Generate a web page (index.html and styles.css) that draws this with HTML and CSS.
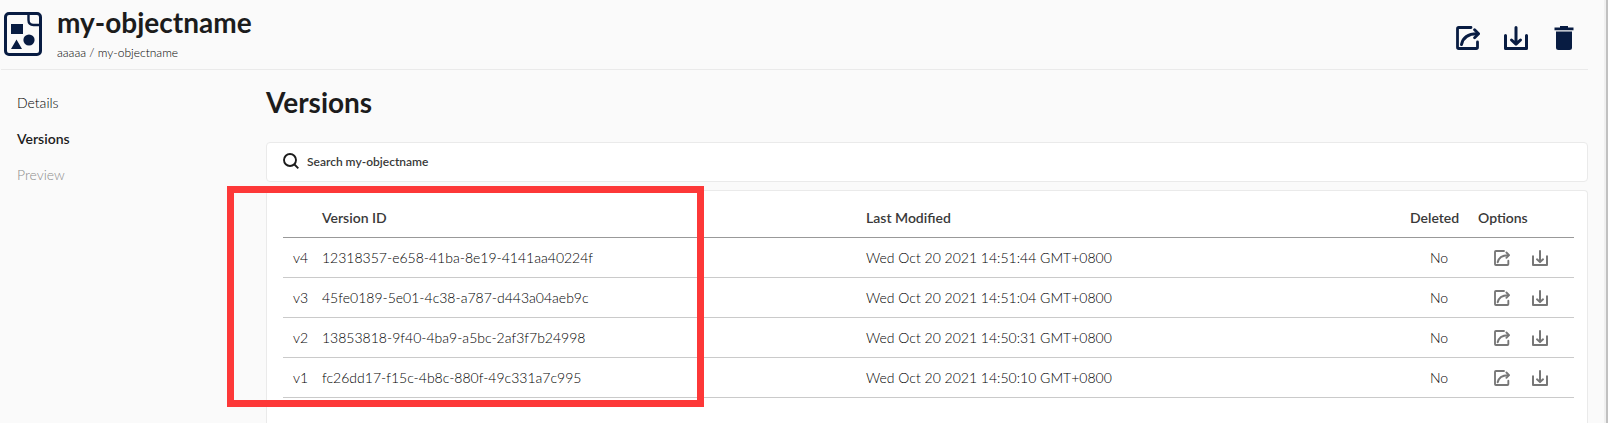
FILE: index.html
```html
<!DOCTYPE html>
<html lang="en">
<head>
    <meta charset="UTF-8">
    <meta name="viewport" content="width=device-width, initial-scale=1.0">
    <title>my-objectname</title>
    <link rel="stylesheet" href="styles.css">
</head>
<body>

    <!-- Icons shared by the header and the table rows -->
    <svg class="icon-defs" aria-hidden="true">
        <symbol id="share" viewBox="0 0 24 24">
            <path d="M15 1.5H2.8Q1.5 1.5 1.5 2.8V21.2Q1.5 22.5 2.8 22.5H20.2Q21.5 22.5 21.5 21.2V16" fill="none" stroke="currentColor" stroke-width="2.8" stroke-linecap="round"/>
            <path d="M5.5 18.5C7 11.5 12 7.8 21 7.8" fill="none" stroke="currentColor" stroke-width="3" stroke-linecap="round"/>
            <path d="M18.6 3.8L22.6 7.8L18.6 11.8" fill="none" stroke="currentColor" stroke-width="2.8" stroke-linecap="round" stroke-linejoin="round"/>
        </symbol>
        <symbol id="download" viewBox="0 0 24 24">
            <path d="M1.5 9.5V22.4H22.5V9.5" fill="none" stroke="currentColor" stroke-width="3" stroke-linecap="round" stroke-linejoin="round"/>
            <path d="M12 1.5V17M7.5 14L12 18.2L16.5 14" fill="none" stroke="currentColor" stroke-width="3" stroke-linecap="round" stroke-linejoin="round"/>
        </symbol>
    </svg>

    <div class="page">
        <!-- Object header -->
        <header class="header">
            <svg class="object-icon" viewBox="0 0 38 44" aria-hidden="true">
                <rect x="1.5" y="1.5" width="35" height="41" rx="3.5" fill="none" stroke="#081c42" stroke-width="3"/>
                <path d="M24.5 1V8Q24.5 13 29.5 13H37" fill="none" stroke="#081c42" stroke-width="2.4"/>
                <path d="M7 12H19V22H7ZM12.5 27.5L18 37H7Z" fill="#081c42"/>
                <circle cx="25" cy="28" r="5.6" fill="#081c42"/>
            </svg>
            <div class="object-name">
                <h1>my-objectname</h1>
                <p>aaaaa / my-objectname</p>
            </div>
            <div class="actions">
                <button type="button" aria-label="Share"><svg><use href="#share"/></svg></button>
                <button type="button" aria-label="Download"><svg><use href="#download"/></svg></button>
                <button type="button" aria-label="Delete">
                    <svg viewBox="0 0 24 24">
                        <path d="M2.5 1.6H8V0H16V1.6H21.5V4.2H2.5ZM4 5.5H20V21.5Q20 24 17.5 24H6.5Q4 24 4 21.5Z" fill="currentColor"/>
                    </svg>
                </button>
            </div>
        </header>

        <div class="body">
            <nav class="menu">
                <a href="#details">Details</a>
                <a href="#versions" class="active">Versions</a>
                <a class="disabled">Preview</a>
            </nav>

            <main class="content">
                <h2>Versions</h2>

                <label class="search">
                    <svg viewBox="0 0 16 16" aria-hidden="true">
                        <circle cx="7" cy="7" r="6" fill="none" stroke="currentColor" stroke-width="1.9"/>
                        <path d="M11.5 11.5L15.3 15.3" stroke="currentColor" stroke-width="1.9"/>
                    </svg>
                    <input type="text" placeholder="Search my-objectname" aria-label="Search my-objectname">
                </label>

                <div class="panel">
                    <table>
                        <thead>
                            <tr>
                                <th class="col-version"></th>
                                <th>Version ID</th>
                                <th>Last Modified</th>
                                <th class="col-deleted">Deleted</th>
                                <th class="col-options">Options</th>
                            </tr>
                        </thead>
                        <tbody>
                            <tr>
                                <td>v4</td>
                                <td>12318357-e658-41ba-8e19-4141aa40224f</td>
                                <td>Wed Oct 20 2021 14:51:44 GMT+0800</td>
                                <td class="deleted">No</td>
                                <td><div class="options">
                                    <button type="button" aria-label="Share v4"><svg><use href="#share"/></svg></button>
                                    <button type="button" aria-label="Download v4"><svg><use href="#download"/></svg></button>
                                </div></td>
                            </tr>
                            <tr>
                                <td>v3</td>
                                <td>45fe0189-5e01-4c38-a787-d443a04aeb9c</td>
                                <td>Wed Oct 20 2021 14:51:04 GMT+0800</td>
                                <td class="deleted">No</td>
                                <td><div class="options">
                                    <button type="button" aria-label="Share v3"><svg><use href="#share"/></svg></button>
                                    <button type="button" aria-label="Download v3"><svg><use href="#download"/></svg></button>
                                </div></td>
                            </tr>
                            <tr>
                                <td>v2</td>
                                <td>13853818-9f40-4ba9-a5bc-2af3f7b24998</td>
                                <td>Wed Oct 20 2021 14:50:31 GMT+0800</td>
                                <td class="deleted">No</td>
                                <td><div class="options">
                                    <button type="button" aria-label="Share v2"><svg><use href="#share"/></svg></button>
                                    <button type="button" aria-label="Download v2"><svg><use href="#download"/></svg></button>
                                </div></td>
                            </tr>
                            <tr>
                                <td>v1</td>
                                <td>fc26dd17-f15c-4b8c-880f-49c331a7c995</td>
                                <td>Wed Oct 20 2021 14:50:10 GMT+0800</td>
                                <td class="deleted">No</td>
                                <td><div class="options">
                                    <button type="button" aria-label="Share v1"><svg><use href="#share"/></svg></button>
                                    <button type="button" aria-label="Download v1"><svg><use href="#download"/></svg></button>
                                </div></td>
                            </tr>
                        </tbody>
                    </table>
                    <!-- Red frame around the version IDs -->
                    <div class="highlight"></div>
                </div>
            </main>
        </div>
    </div>

</body>
</html>
```
FILE: styles.css
```css
* {
    margin: 0;
    padding: 0;
    box-sizing: border-box;
}

body {
    font-family: Lato, sans-serif;
    font-size: 14px;
    color: #1c1c1c;
    background-color: #fafafa;
    border-right: 2px solid #c1c1c1;
}

.icon-defs {
    display: none;
}

.page {
    display: flex;
    flex-direction: column;
    min-height: 100vh;
    padding: 0 16px 0 1px;
    border-right: 2px solid #f0f0f0;
}

button {
    display: block;
    border: none;
    background: none;
    color: inherit;
    cursor: pointer;
}

button svg {
    display: block;
    width: 100%;
    height: 100%;
}

/* Header */
.header {
    display: flex;
    height: 70px;
    padding-left: 3px;
    border-bottom: 1px solid #eaeaea;
}

.object-icon {
    width: 38px;
    height: 44px;
    margin: 12px 15px 0 0;
}

.object-name {
    flex: 1;
    padding-top: 4px;
}

.object-name h1 {
    font-size: 28px;
    font-weight: 700;
    line-height: 36px;
}

.object-name p {
    padding-top: 3px;
    font-size: 12px;
    font-weight: 300;
    line-height: 20px;
    color: #000;
}

.actions {
    display: flex;
    gap: 24px;
    padding: 26px 12px 0 0;
    color: #081c42;
}

.actions button {
    width: 24px;
    height: 24px;
}

/* Side menu and content */
.body {
    display: flex;
    flex: 1;
}

.menu {
    display: flex;
    flex-direction: column;
    flex: none;
    width: 265px;
    padding: 15px 16px;
}

.menu a {
    font-weight: 300;
    line-height: 36px;
    color: #000;
    text-decoration: none;
}

.menu .active {
    font-weight: 600;
    color: #1c1c1c;
}

.menu .disabled {
    color: #8c8c8c;
}

.content {
    display: flex;
    flex-direction: column;
    flex: 1;
}

.content h2 {
    padding-top: 14px;
    margin-bottom: 22px;
    font-size: 28px;
    font-weight: 700;
    line-height: 36px;
}

/* Search box */
.search {
    display: flex;
    align-items: center;
    gap: 8px;
    height: 40px;
    padding: 0 16px 2px;
    margin-bottom: 8px;
    background-color: #fff;
    border: 1px solid #eaeaea;
    border-radius: 4px;
}

.search svg {
    width: 16px;
    height: 16px;
}

.search input {
    flex: 1;
    border: none;
    outline: none;
    background: none;
    font-family: inherit;
    font-size: 12px;
    font-weight: 600;
}

.search input::placeholder {
    color: #393939;
}

/* Versions table */
.panel {
    position: relative;
    flex: 1;
    padding: 7px 13px 16px 16px;
    background-color: #fff;
    border: 1px solid #eaeaea;
    border-bottom: none;
    border-radius: 4px 4px 0 0;
}

table {
    width: 100%;
    table-layout: fixed;
    border-collapse: separate;
    border-spacing: 0;
    color: #000;
}

th,
td {
    height: 40px;
    padding-left: 10px;
    text-align: left;
    white-space: nowrap;
    border-bottom: 1px solid #cacaca;
}

th {
    font-weight: 600;
    color: #393939;
    border-bottom-color: #999;
}

td {
    font-weight: 300;
}

.col-version {
    width: 29px;
}

.col-deleted {
    width: 68px;
}

.col-options {
    width: 106px;
}

.deleted {
    text-align: center;
}

td:last-child {
    padding: 0;
}

.options {
    display: flex;
    justify-content: center;
    gap: 22px;
    color: #777;
}

.options button {
    width: 16px;
    height: 16px;
}

.highlight {
    position: absolute;
    top: -5px;
    left: -40px;
    width: 477px;
    height: 221px;
    border: 7px solid #fd3838;
    pointer-events: none;
}
```
